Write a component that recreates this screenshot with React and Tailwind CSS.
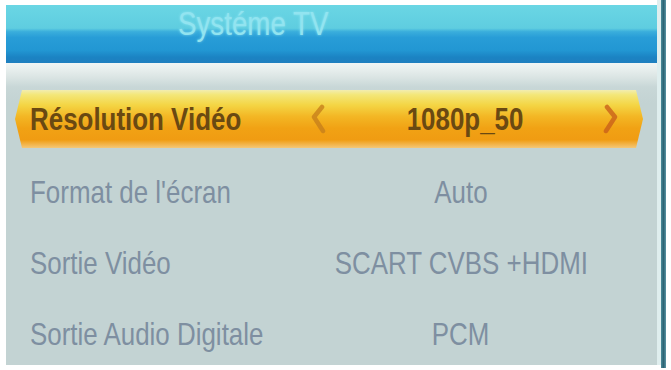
function Chevron({ dir, color }) {
  const pts = dir === 'left' ? '12,3 4,13 13,27' : '4,3 12,13 3,27';
  return (
    <svg width="17" height="30" viewBox="0 0 17 30" className="block shrink-0">
      <polyline points={pts} fill="none" stroke={color} strokeWidth="4.5" strokeLinecap="round" strokeLinejoin="round" opacity="0.8" />
    </svg>
  );
}

function Txt({ children, center }) {
  return (
    <span className={`inline-block whitespace-nowrap scale-x-[0.81] ${center ? 'origin-center' : 'origin-left'}`}>
      {children}
    </span>
  );
}

export default function App() {
  const rows = [
    { label: "Format de l'écran", value: 'Auto' },
    { label: 'Sortie Vidéo', value: 'SCART CVBS +HDMI' },
    { label: 'Sortie Audio Digitale', value: 'PCM' },
  ];

  return (
    <div
      className="w-[671px] h-[370px] bg-white pl-[6px] overflow-hidden flex"
      style={{ fontFamily: '"Liberation Sans", Arial, sans-serif' }}
    >
      <div className="w-[651px] pt-[5px] h-[365px] flex flex-col">
        {/* Header */}
        <div className="h-[58px] bg-[linear-gradient(to_bottom,#6ad6e4_0%,#5fcde0_40%,#3aaedc_46%,#289dd7_56%,#2297d3_78%,#1b83c3_90%,#1f7fbf_100%)] pl-[172px] pt-[2px]">
          <span className="inline-block whitespace-nowrap text-[33px] leading-none text-[#92e4f0] scale-x-[0.84] origin-left [text-shadow:0_0_3px_rgba(170,240,250,0.6)]">
            Systéme TV
          </span>
        </div>

        {/* Body */}
        <div className="flex-1 flex flex-col bg-[linear-gradient(to_bottom,#f1f5f4_0px,#e8efee_6px,#dbe5e4_14px,#c8d7d7_24px,#c3d3d3_40px)] pt-[27px]">
          <div className="ml-[9px] w-[628px] h-[58px] flex items-center bg-[linear-gradient(to_bottom,#f2edb0_0%,#f3e77a_8%,#f4d544_26%,#f3b624_46%,#f1a214_66%,#f09c12_86%,#f4c878_100%)] [clip-path:polygon(7px_0,calc(100%-7px)_0,100%_50%,calc(100%-7px)_100%,7px_100%,0_50%)] text-[#6a4912] font-bold text-[32px] leading-none">
            <span className="w-[295px] shrink-0 pl-[15px]"><Txt>Résolution Vidéo</Txt></span>
            <Chevron dir="left" color="#c7801c" />
            <span className="w-[276px] shrink-0 flex justify-center"><Txt center>1080p_50</Txt></span>
            <Chevron dir="right" color="#c9601a" />
          </div>
          {rows.map((r) => (
            <div key={r.label} className="h-[71px] pt-[28px] flex items-start text-[#7e8fa1] text-[32px] leading-none">
              <span className="w-[295px] shrink-0 pl-[24px]"><Txt>{r.label}</Txt></span>
              <span className="w-[320px] shrink-0 flex justify-center"><Txt center>{r.value}</Txt></span>
            </div>
          ))}
        </div>
      </div>
      {/* right frame edge */}
      <div className="w-[4px] h-[365px] bg-[#dfeeee]" />
      <div className="w-[5px] h-[368px] bg-[linear-gradient(to_right,#4c8a9a,#2c6474,#5a94a4)]" />
    </div>
  );
}
